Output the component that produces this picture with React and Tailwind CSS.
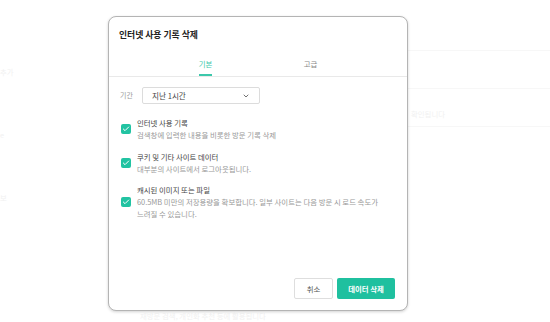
import { Check, ChevronDown } from "lucide-react";

const font = { fontFamily: '"Noto Sans CJK KR", "Noto Sans", sans-serif' };

const items = [
    { title: "인터넷 사용 기록", desc: "검색창에 입력한 내용을 비롯한 방문 기록 삭제" },
    { title: "쿠키 및 기타 사이트 데이터", desc: "대부분의 사이트에서 로그아웃됩니다." },
    {
        title: "캐시된 이미지 또는 파일",
        desc: "60.5MB 미만의 저장용량을 확보합니다. 일부 사이트는 다음 방문 시 로드 속도가 느려질 수 있습니다.",
    },
];

const CheckItem = ({ title, desc }) => (
    <div className="flex items-center gap-[6px]">
        <span className="ml-[1px] flex h-[10px] w-[10px] shrink-0 items-center justify-center rounded-[2px] bg-[#22c3a2]">
            <Check size={8} strokeWidth={3} className="text-white" />
        </span>
        <div className="break-keep text-[7.4px] leading-[12px]">
            <p className="text-[#444]">{title}</p>
            <p className="text-[#999]">{desc}</p>
        </div>
    </div>
);

const App = () => {
    return (
        <div className="relative h-[322px] w-[550px] overflow-hidden bg-white" style={font}>
            {/* faded page behind the dialog */}
            <div className="flex h-full">
                <div className="flex w-[108px] flex-col gap-[52px] pt-[66px] text-[7.4px] text-[#f1f1f1]">
                    <span>추가</span>
                    <span>e</span>
                    <span>보</span>
                </div>
                <div className="flex-1" />
                <div className="flex w-[142px] flex-col pt-[50px] text-[7.4px] text-[#f1f1f1]">
                    <div className="h-[38px] border-t border-[#f7f7f7]" />
                    <div className="h-[38px] border-t border-[#f7f7f7] pl-[3px] pt-[19px] leading-[12px]">확인됩니다</div>
                    <div className="border-t border-[#f7f7f7]" />
                </div>
            </div>

            <p className="absolute left-[140px] top-[310px] text-[7.4px] leading-[11px] text-[#f1f1f1]">
                재방문 검색, 개인화 추천 등에 활용됩니다
            </p>

            <div className="absolute left-[108px] top-[16px] flex h-[295px] w-[300px] flex-col rounded-[8px] border border-[#b4b4b4] bg-white shadow-[0_1px_3px_rgba(0,0,0,0.18)]">
                <h1 className="px-[10px] pt-[11px] text-[8.8px] font-bold leading-[14px] text-[#222]">
                    인터넷 사용 기록 삭제
                </h1>

                <div className="mt-[13px] flex h-[22px] justify-center border-b border-[#e9e9e9] text-[7.4px]">
                    <div className="flex w-[105px] items-end justify-center">
                        <span className="border-b-2 border-[#3cc8ab] pb-[4px] leading-[12px] text-[#3cc8ab]">기본</span>
                    </div>
                    <div className="flex w-[105px] items-end justify-center">
                        <span className="pb-[6px] leading-[12px] text-[#888]">고급</span>
                    </div>
                </div>

                <div className="flex flex-1 flex-col px-[11px] pt-[10px]">
                    <div className="flex items-center">
                        <span className="w-[22px] text-[7px] text-[#999]">기간</span>
                        <div className="flex h-[17px] w-[118px] items-center justify-between rounded-[2px] border border-[#dcdcdc] pl-[9px] pr-[9px] text-[7.6px] text-[#444]">
                            <span>지난 1시간</span>
                            <ChevronDown size={8} strokeWidth={2.5} className="text-[#555]" />
                        </div>
                    </div>

                    <div className="mt-[13px] flex flex-col gap-[9.5px]">
                        {items.map((item) => (
                            <CheckItem key={item.title} {...item} />
                        ))}
                    </div>

                    <div className="mt-auto flex justify-end gap-[4px] pb-[11px] pr-[1px]">
                        <button className="h-[21px] w-[39px] rounded-[2px] border border-[#dedede] bg-white text-[7.4px] text-[#555]">
                            취소
                        </button>
                        <button className="h-[21px] w-[58px] rounded-[2px] bg-[#1fc09f] text-[7.4px] font-bold text-white">
                            데이터 삭제
                        </button>
                    </div>
                </div>
            </div>
        </div>
    );
};

export default App;
